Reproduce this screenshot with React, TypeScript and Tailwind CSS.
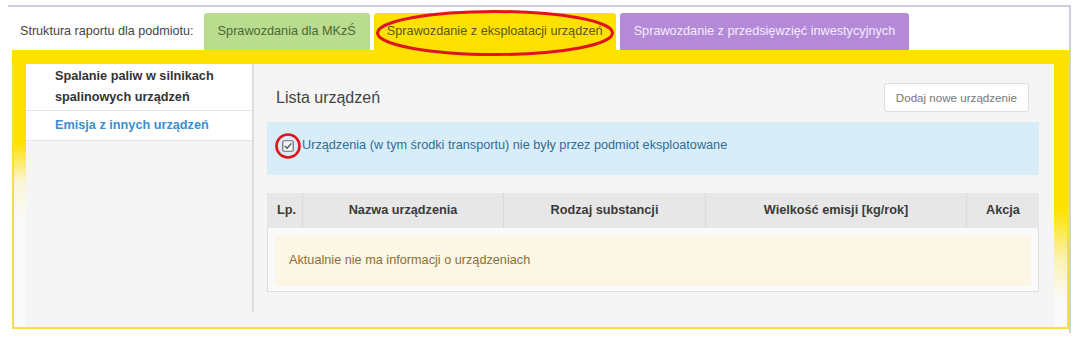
import React from 'react';

const font = "font-['Liberation_Sans',Arial,sans-serif]";

function CheckIcon() {
  return (
    <svg width="12" height="12" viewBox="0 0 12 12" className="shrink-0">
      <rect x="0.75" y="0.75" width="10.5" height="10.5" rx="1.5" fill="#f4f8fb" stroke="#6f6f6f" strokeWidth="1.2" />
      <path d="M3 6.2 L5.1 8.2 L9 3.8" fill="none" stroke="#555" strokeWidth="1.3" strokeLinecap="round" strokeLinejoin="round" />
    </svg>
  );
}

function Tabs() {
  return (
    <div className="flex items-end h-[43px] pl-[12px]">
      <div className="self-center mt-[5px] text-[12.6px] text-[#444] mr-[10px]">Struktura raportu dla podmiotu:</div>
      <div className="flex gap-[4px] h-[37px] relative">
        <div className="flex items-center px-[14px] rounded-t-[3px] bg-[#b9dc8e] text-[12.7px] text-[#4a6a31]">
          Sprawozdania dla MKzŚ
        </div>
        <div className="relative flex items-center px-[13px] rounded-t-[3px] bg-[#ffe100] text-[12.7px] text-[#5b561a]">
          Sprawozdanie z eksploatacji urządzeń
          <svg className="absolute left-[1px] top-[-4px] pointer-events-none" width="240" height="48" viewBox="0 0 240 48">
            <ellipse cx="120" cy="24" rx="117.5" ry="21.5" fill="none" stroke="#e0141c" strokeWidth="3" />
          </svg>
        </div>
        <div className="flex items-center px-[14px] rounded-t-[3px] bg-[#b48ad8] text-[12.7px] text-[#f4ecff]">
          Sprawozdanie z przedsięwzięć inwestycyjnych
        </div>
      </div>
    </div>
  );
}

function Sidebar() {
  return (
    <div className="w-[228px] shrink-0 mb-[15px] border-r-2 border-[#dedede]">
      <div className="h-[47px] flex items-center pl-[29px] bg-white border-b border-[#e6e6e6] text-[12.7px] leading-[21px] text-[#333] font-semibold">
        <div>
          Spalanie paliw w silnikach
          <br />
          spalinowych urządzeń
        </div>
      </div>
      <div className="h-[30px] flex items-center pl-[29px] bg-white border-b border-[#e6e6e6] text-[12.7px] text-[#3b8fd0] font-semibold">
        Emisja z innych urządzeń
      </div>
    </div>
  );
}

function DeviceTable() {
  const cols = [
    { label: 'Lp.', w: 'w-[35px]', align: 'justify-start pl-[10px]' },
    { label: 'Nazwa urządzenia', w: 'w-[201px]', align: 'justify-center' },
    { label: 'Rodzaj substancji', w: 'w-[202px]', align: 'justify-center' },
    { label: 'Wielkość emisji [kg/rok]', w: 'w-[261px]', align: 'justify-center' },
    { label: 'Akcja', w: 'flex-1', align: 'justify-center' },
  ];
  return (
    <div className="mt-[18px]">
      <div className="flex h-[35px] bg-[#e7e7e7]">
        {cols.map((c, i) => (
          <div
            key={c.label}
            className={`${c.w} ${c.align} flex items-center text-[12.7px] font-bold text-[#3a3a3a] ${i > 0 ? 'border-l border-[#dadada]' : ''}`}
          >
            {c.label}
          </div>
        ))}
      </div>
      <div className="border border-[#dddddd] border-t-0 bg-[#fafafa] pt-[8px] pb-[5px] px-[7px]">
        <div className="h-[50px] flex items-center pl-[14px] bg-[#fcf7e4] text-[12.7px] text-[#87703f]">
          Aktualnie nie ma informacji o urządzeniach
        </div>
      </div>
    </div>
  );
}

export default function App() {
  return (
    <div className={`w-[1080px] h-[339px] bg-white overflow-hidden ${font}`}>
      <div className="ml-[8px] mt-[5px] w-[1063px] h-[328px] border-t-2 border-r-2 border-[#ccd1d9]">
        <Tabs />
        <div className="ml-[4px] w-[1057px] h-[279px] flex flex-col border-x-2 border-b-2 border-[#f5e040]">
          <div className="h-[14px] bg-[#ffe100] -mx-[2px]" />
          <div className="flex flex-1">
            <div className="w-[12px] bg-[linear-gradient(to_bottom,#ffe100_0%,#ffe100_30%,#fbf6d8_45%,#fafafa_60%)]" />
            <div className="flex flex-1 bg-[#f5f5f5]">
              <Sidebar />
              <div className="flex-1 pl-[13px] pr-[15px]">
                <div className="mt-[19px] h-[29px] flex items-center justify-between pl-[9px] pr-[10px]">
                  <div className="text-[16px] text-[#444]">Lista urządzeń</div>
                  <div className="h-[29px] px-[11px] flex items-center bg-white border border-[#dddddd] rounded-[3px] text-[11.6px] text-[#777]">
                    Dodaj nowe urządzenie
                  </div>
                </div>
                <div className="mt-[10px] h-[53px] flex items-center gap-[8px] pl-[15px] pb-[6px] bg-[#d8edf8] text-[12.7px] text-[#2f6d94] relative">
                  <div className="relative flex items-center">
                    <CheckIcon />
                    <svg className="absolute left-[-8px] top-[-7px] pointer-events-none" width="28" height="28" viewBox="0 0 28 28">
                      <circle cx="14" cy="13" r="11.5" fill="none" stroke="#e0141c" strokeWidth="2.6" />
                    </svg>
                  </div>
                  <span>Urządzenia (w tym środki transportu) nie były przez podmiot eksploatowane</span>
                </div>
                <DeviceTable />
              </div>
            </div>
            <div className="w-[13px] bg-[linear-gradient(to_bottom,#ffe100_0%,#ffe100_55%,#fbf3b8_75%,#fafafa_90%)]" />
          </div>
        </div>
      </div>
    </div>
  );
}
